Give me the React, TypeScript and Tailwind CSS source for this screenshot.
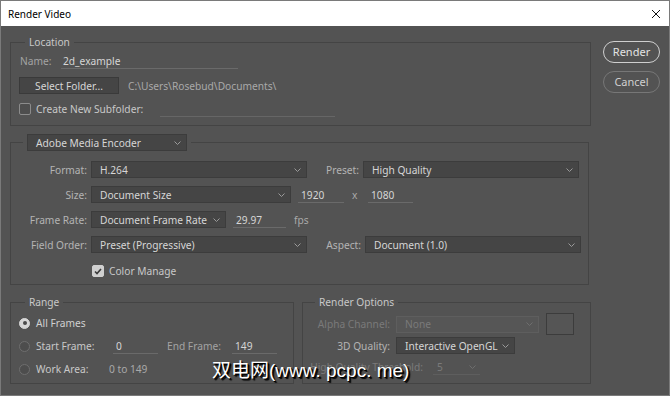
import React from 'react';

function Chevron({ color = '#9a9a9a' }: { color?: string }) {
  return (
    <svg width="7" height="4" viewBox="0 0 7 4" className="shrink-0">
      <polyline points="0.5,0.5 3.5,3.5 6.5,0.5" fill="none" stroke={color} strokeWidth="1" />
    </svg>
  );
}

function Dropdown({ w, value, disabled }: { w: string; value: string; disabled?: boolean }) {
  return (
    <div
      className={`${w} flex h-[17px] items-center justify-between pl-[8px] pr-[5px] border ${
        disabled ? 'bg-[#565656] border-[#5e5e5e] text-[#7a7a7a]' : 'bg-[#454545] border-[#3c3c3c] text-[#d6d6d6]'
      }`}
    >
      <span className="whitespace-nowrap">{value}</span>
      <Chevron color={disabled ? '#6e6e6e' : '#9a9a9a'} />
    </div>
  );
}

function Field({ w, value }: { w: string; value: string }) {
  return <div className={`${w} h-[16px] border-b border-[#6a6a6a] pl-[3px] text-[#d6d6d6]`}>{value}</div>;
}

function Checkbox({ checked }: { checked?: boolean }) {
  return (
    <div
      className={`flex h-[12px] w-[12px] shrink-0 items-center justify-center rounded-[2px] border ${
        checked ? 'bg-[#d0d0d0] border-[#d0d0d0]' : 'border-[#8c8c8c] bg-[#4e4e4e]'
      }`}
    >
      {checked && (
        <svg width="8" height="7" viewBox="0 0 8 7">
          <polyline points="1,3.5 3,5.5 7,1" fill="none" stroke="#3a3a3a" strokeWidth="1.6" />
        </svg>
      )}
    </div>
  );
}

function Radio({ checked }: { checked?: boolean }) {
  return (
    <div
      className={`flex h-[11px] w-[11px] shrink-0 items-center justify-center rounded-full border ${
        checked ? 'bg-[#d6d6d6] border-[#d6d6d6]' : 'border-[#6e6e6e] bg-[#4d4d4d]'
      }`}
    >
      {checked && <div className="h-[4px] w-[4px] rounded-full bg-[#4a4a4a]" />}
    </div>
  );
}

export default function App() {
  return (
    <div className="relative h-[396px] w-[670px] overflow-hidden border border-[#7a7a7a] bg-[#535353] font-['Noto_Sans',sans-serif] text-[10.2px] leading-[16px] text-[#d4d4d4]">
      {/* Title bar */}
      <div className="flex h-[25px] items-center justify-between bg-white pl-[7px] pr-[8px] text-[10px] text-black">
        <span>Render Video</span>
        <svg width="10" height="10" viewBox="0 0 10 10">
          <path d="M1 1 L9 9 M9 1 L1 9" stroke="#111" strokeWidth="1" />
        </svg>
      </div>

      <div className="flex pl-[9px] pt-[8px]">
        <div className="w-[581px]">
          {/* Location */}
          <fieldset className="border border-[#444444] pb-[8px]">
            <legend className="ml-[14px] px-[4px] text-[#c8c8c8]">Location</legend>
            <div className="mt-[3px] flex h-[16px] items-center pl-[9px]">
              <span className="w-[41px] text-[#a3a3a3]">Name:</span>
              <div className="h-[16px] w-[177px] border-b border-[#6a6a6a] pl-[2px] text-[#d6d6d6]">2d_example</div>
            </div>
            <div className="mt-[8px] flex items-center pl-[8px]">
              <div className="flex h-[17px] w-[100px] items-center justify-center border border-[#3a3a3a] bg-[#454545] text-[#d6d6d6]">
                Select Folder...
              </div>
              <span className="ml-[9px] text-[#a9a9a9]">C:\Users\Rosebud\Documents\</span>
            </div>
            <div className="mt-[7px] flex h-[16px] items-center pl-[8px]">
              <Checkbox />
              <span className="ml-[5px] w-[124px] text-[#c8c8c8]">Create New Subfolder:</span>
              <div className="h-[16px] w-[175px] border-b border-[#666666]" />
            </div>
          </fieldset>

          {/* Encoder */}
          <fieldset className="mt-[8px] w-[579px] border border-[#444444] pb-[7px]">
            <legend className="ml-[12px] px-[4px]">
              <Dropdown w="w-[160px]" value="Adobe Media Encoder" />
            </legend>
            <div className="mt-[10px] flex h-[17px] items-center">
              <span className="w-[76px] text-right text-[#b4b4b4]">Format:</span>
              <div className="ml-[4px]">
                <Dropdown w="w-[216px]" value="H.264" />
              </div>
              <span className="w-[52px] text-right text-[#b4b4b4]">Preset:</span>
              <div className="ml-[4px]">
                <Dropdown w="w-[216px]" value="High Quality" />
              </div>
            </div>
            <div className="mt-[8px] flex h-[17px] items-center">
              <span className="w-[76px] text-right text-[#b4b4b4]">Size:</span>
              <div className="ml-[4px]">
                <Dropdown w="w-[200px]" value="Document Size" />
              </div>
              <div className="ml-[7px]">
                <Field w="w-[46px]" value="1920" />
              </div>
              <span className="ml-[8px] w-[6px] text-[#a9a9a9]">x</span>
              <div className="ml-[10px]">
                <Field w="w-[45px]" value="1080" />
              </div>
            </div>
            <div className="mt-[8px] flex h-[17px] items-center">
              <span className="w-[76px] text-right text-[#b4b4b4]">Frame Rate:</span>
              <div className="ml-[4px]">
                <Dropdown w="w-[135px]" value="Document Frame Rate" />
              </div>
              <div className="ml-[7px]">
                <Field w="w-[53px]" value="29.97" />
              </div>
              <span className="ml-[8px] text-[#a9a9a9]">fps</span>
            </div>
            <div className="mt-[8px] flex h-[17px] items-center">
              <span className="w-[76px] text-right text-[#b4b4b4]">Field Order:</span>
              <div className="ml-[4px]">
                <Dropdown w="w-[216px]" value="Preset (Progressive)" />
              </div>
              <span className="w-[54px] text-right text-[#b4b4b4]">Aspect:</span>
              <div className="ml-[4px]">
                <Dropdown w="w-[216px]" value="Document (1.0)" />
              </div>
            </div>
            <div className="mt-[12px] flex h-[12px] items-center pl-[81px]">
              <Checkbox checked />
              <span className="ml-[5px] text-[#c8c8c8]">Color Manage</span>
            </div>
          </fieldset>

          <div className="mt-[9px] flex gap-[8px]">
            {/* Range */}
            <fieldset className="w-[284px] border border-[#444444] pb-[6px]">
              <legend className="ml-[14px] px-[4px] text-[#c8c8c8]">Range</legend>
              <div className="mt-[5px] flex h-[16px] items-center pl-[8px]">
                <Radio checked />
                <span className="ml-[6px] text-[#d0d0d0]">All Frames</span>
              </div>
              <div className="mt-[7px] flex h-[16px] items-center pl-[8px]">
                <Radio />
                <span className="ml-[6px] w-[77px] text-[#c8c8c8]">Start Frame:</span>
                <Field w="w-[45px]" value="0" />
                <span className="ml-[9px] w-[65px] text-[#a3a3a3]">End Frame:</span>
                <Field w="w-[45px]" value="149" />
              </div>
              <div className="mt-[7px] flex h-[16px] items-center pl-[8px]">
                <Radio />
                <span className="ml-[6px] w-[73px] text-[#c8c8c8]">Work Area:</span>
                <span className="text-[#a9a9a9]">0 to 149</span>
              </div>
            </fieldset>

            {/* Render Options */}
            <fieldset className="w-[289px] border border-[#444444] pb-[7px]">
              <legend className="ml-[12px] px-[4px] text-[#c8c8c8]">Render Options</legend>
              <div className="mt-[3px] flex h-[22px] items-center">
                <span className="w-[87px] text-right text-[#7a7a7a]">Alpha Channel:</span>
                <div className="ml-[6px]">
                  <Dropdown w="w-[143px]" value="None" disabled />
                </div>
                <div className="ml-[7px] h-[22px] w-[28px] border border-[#3c3c3c] bg-[#555555]" />
              </div>
              <div className="mt-[2px] flex h-[17px] items-center">
                <span className="w-[87px] text-right text-[#b4b4b4]">3D Quality:</span>
                <div className="ml-[6px]">
                  <Dropdown w="w-[119px]" value="Interactive OpenGL" />
                </div>
              </div>
              <div className="mt-[5px] flex h-[16px] items-center">
                <span className="w-[120px] text-right text-[#7a7a7a]">High Quality Threshold:</span>
                <div className="ml-[10px] flex h-[16px] w-[47px] items-center justify-between border-b border-[#5e5e5e] pl-[4px] pr-[4px] text-[#7a7a7a]">
                  <span>5</span>
                  <Chevron color="#6e6e6e" />
                </div>
              </div>
            </fieldset>
          </div>
        </div>

        {/* Buttons */}
        <div className="ml-[12px] mt-[7px] flex flex-col gap-[8px]">
          <div className="flex h-[22px] w-[57px] items-center justify-center rounded-full border border-[#cfcfcf] text-[11px] text-[#e4e4e4]">
            Render
          </div>
          <div className="flex h-[22px] w-[57px] items-center justify-center rounded-full border border-[#777777] text-[11px] text-[#d0d0d0]">
            Cancel
          </div>
        </div>
      </div>

      {/* Watermark */}
      <div className="absolute left-[211px] top-[358px] whitespace-nowrap font-['Liberation_Sans','Noto_Sans_CJK_SC',sans-serif] text-[19px] leading-[24px] text-white [text-shadow:1px_1px_0_#000,2px_2px_1px_#000]">
        双电网(www. pcpc. me)
      </div>
    </div>
  );
}
